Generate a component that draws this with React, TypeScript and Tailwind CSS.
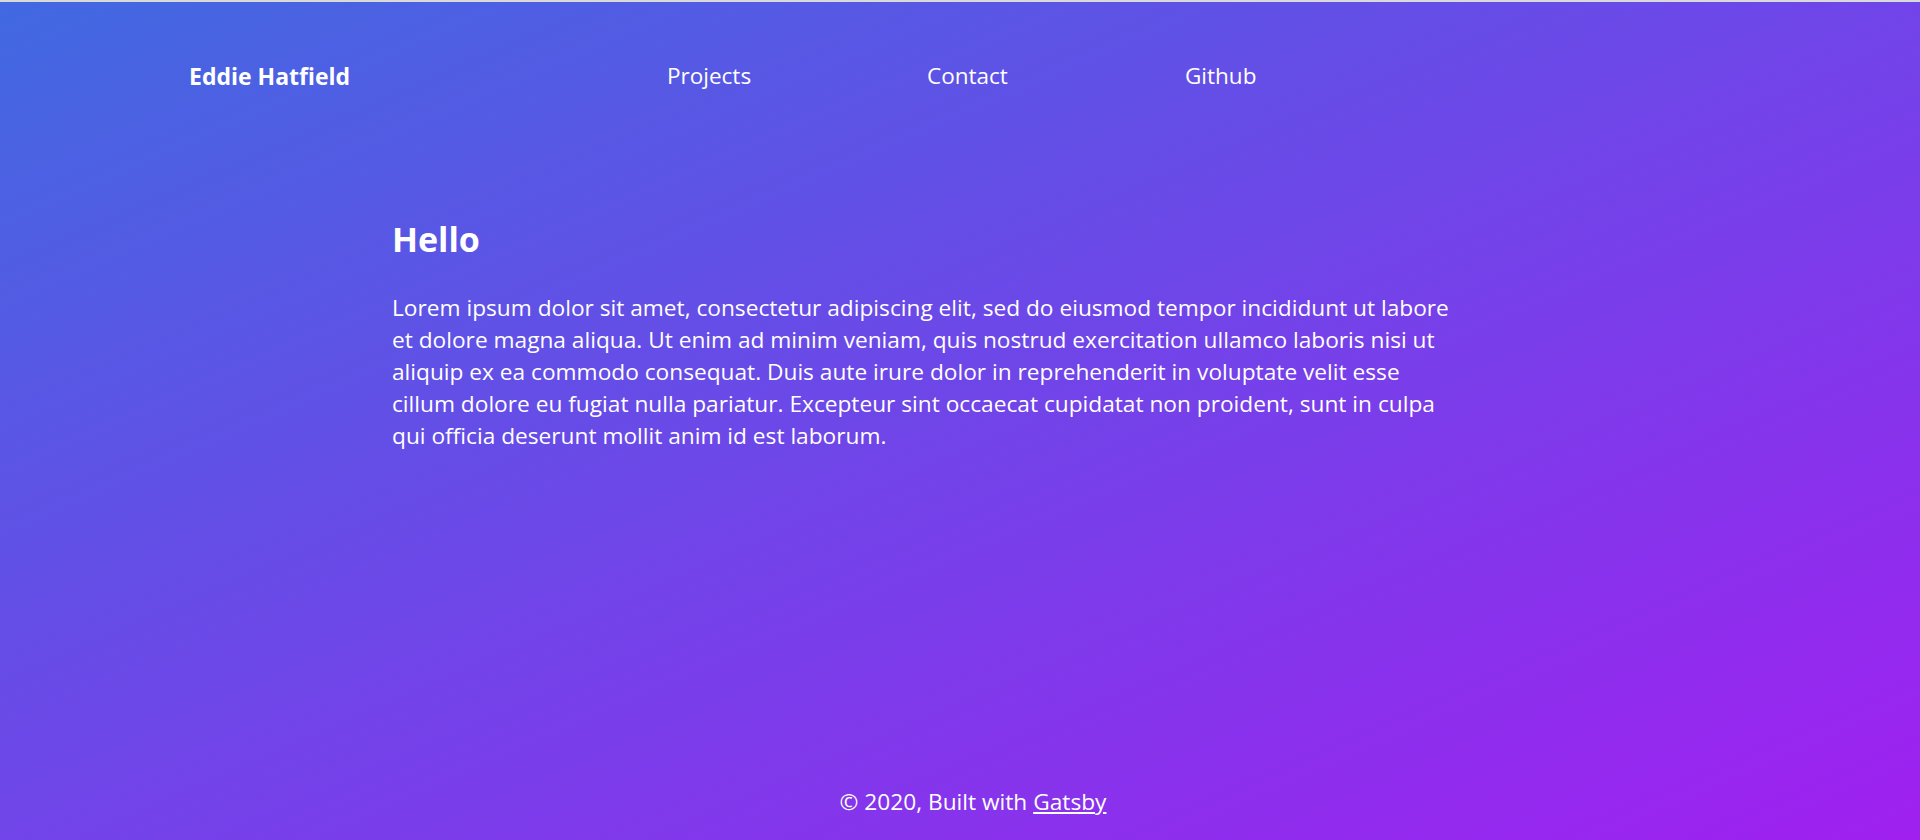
const lines = [
  "Lorem ipsum dolor sit amet, consectetur adipiscing elit, sed do eiusmod tempor incididunt ut labore",
  "et dolore magna aliqua. Ut enim ad minim veniam, quis nostrud exercitation ullamco laboris nisi ut",
  "aliquip ex ea commodo consequat. Duis aute irure dolor in reprehenderit in voluptate velit esse",
  "cillum dolore eu fugiat nulla pariatur. Excepteur sint occaecat cupidatat non proident, sunt in culpa",
  "qui officia deserunt mollit anim id est laborum.",
];

export default function App() {
  return (
    <div className="min-h-screen w-full flex flex-col border-t-2 border-[#d9d9d9] bg-[linear-gradient(to_bottom_right,#4169e1,#a020f0)] text-white font-['Open_Sans',sans-serif]">
      {/* Header */}
      <header className="h-[148px] flex items-center pl-[189px]">
        <a className="w-[478px] text-[23px] font-bold">Eddie Hatfield</a>
        <nav className="flex text-[22.5px]">
          <a className="w-[260px]">Projects</a>
          <a className="w-[258px]">Contact</a>
          <a>Github</a>
        </nav>
      </header>

      <main className="pl-[392px] pt-[65px]">
        <h1 className="text-[34px] font-bold leading-[48px]">Hello</h1>
        <p className="mt-[29px] text-[22.7px] leading-[32px]">
          {lines.map((l, i) => (
            <span key={i} className="block whitespace-nowrap">
              {l}
            </span>
          ))}
        </p>
      </main>

      {/* Footer */}
      <footer className="mt-auto pb-[22px] pl-[26px] text-center text-[22.7px] leading-[32px]">
        © 2020, Built with <a className="underline">Gatsby</a>
      </footer>
    </div>
  );
}
